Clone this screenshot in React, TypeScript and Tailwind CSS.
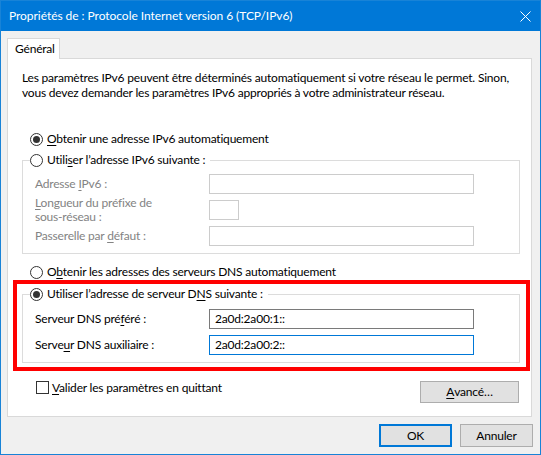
import type { ReactNode } from 'react';

function Radio({ checked, children }: { checked?: boolean; children: ReactNode }) {
  return (
    <span className="flex items-center h-[16px]">
      <span className="w-[13px] h-[13px] shrink-0 rounded-full border border-[#333333] bg-white flex items-center justify-center">
        {checked && <span className="w-[7px] h-[7px] rounded-full bg-[#333333]" />}
      </span>
      <span className="ml-[4px] whitespace-nowrap">{children}</span>
    </span>
  );
}

// underlined access key letter
function K({ children }: { children: ReactNode }) {
  return <span className="underline underline-offset-[2px]">{children}</span>;
}

function Field({ value, disabled, focused, small }: { value?: string; disabled?: boolean; focused?: boolean; small?: boolean }) {
  const border = disabled ? 'border-[#cccccc]' : focused ? 'border-[#0078d7]' : 'border-[#7a7a7a]';
  return (
    <div className={`h-[20px] ${small ? 'w-[30px]' : 'w-[265px]'} border ${border} bg-white pl-[5px] flex items-center leading-none text-black`}>
      {value}
    </div>
  );
}

function Row({ label, children }: { label: ReactNode; children: ReactNode }) {
  return (
    <div className="flex h-[20px]">
      <div className="w-[174px] h-[20px] flex items-center leading-[14px]">{label}</div>
      {children}
    </div>
  );
}

function Button({ children, primary, className = '' }: { children: ReactNode; primary?: boolean; className?: string }) {
  return (
    <div
      className={`flex items-center justify-center bg-[#e1e1e1] text-black ${
        primary ? 'border-2 border-[#0078d7]' : 'border border-[#adadad]'
      } ${className}`}
    >
      {children}
    </div>
  );
}

export default function App() {
  return (
    <div className="w-[541px] h-[455px] border border-[#1883d7] bg-[#f0f0f0] flex flex-col text-[12px] tracking-[-0.2px] font-['Lato','Noto_Sans',sans-serif] text-black">
      {/* barre de titre */}
      <div className="h-[30px] shrink-0 bg-[#0078d7] text-white flex items-center justify-between pl-[8px] pr-[9px]">
        <span className="whitespace-nowrap tracking-[-0.05px]">Propriétés de : Protocole Internet version 6 (TCP/IPv6)</span>
        <svg width="11" height="11" viewBox="0 0 11 11" className="block">
          <path d="M0.5 0.5 L10.5 10.5 M10.5 0.5 L0.5 10.5" stroke="#ffffff" strokeWidth="1" fill="none" />
        </svg>
      </div>

      <div className="flex-1 pl-[6px] pr-[7px] pt-[7px]">
        {/* onglet */}
        <div className="relative z-10 -mb-px w-[53px] h-[21px] bg-white border border-b-0 border-[#d9d9d9] pl-[7px] flex items-center">
          Général
        </div>

        {/* panneau de l'onglet */}
        <div className="w-[525px] h-[359px] bg-white border border-[#d9d9d9]">
          <p className="ml-[14px] mt-[11px] leading-[15px] whitespace-nowrap">
            Les paramètres IPv6 peuvent être déterminés automatiquement si votre réseau le permet. Sinon,
            <br />
            vous devez demander les paramètres IPv6 appropriés à votre administrateur réseau.
          </p>

          <div className="ml-[22px] mt-[31px]">
            <Radio checked>
              <K>O</K>btenir une adresse IPv6 automatiquement
            </Radio>
          </div>

          {/* adresse IPv6 manuelle (désactivée) */}
          <div className="ml-[14px] mt-[13px] w-[498px] border border-[#dcdcdc] pl-[12px] pb-[7px]">
            <div className="-mt-[9px] -ml-[5px] flex">
              <span className="bg-white pr-[5px]">
                <Radio>
                  Utili<K>s</K>er l’adresse IPv6 suivante :
                </Radio>
              </span>
            </div>
            <div className="mt-[6px] flex flex-col gap-[6px] text-[#838383]">
              <Row label={<span>Adresse <K>I</K>Pv6 :</span>}>
                <Field disabled />
              </Row>
              <Row
                label={
                  <span>
                    <K>L</K>ongueur du préfixe de
                    <br />
                    sous-réseau :
                  </span>
                }
              >
                <Field disabled small />
              </Row>
              <Row label={<span>Passerelle par <K>d</K>éfaut :</span>}>
                <Field disabled />
              </Row>
            </div>
          </div>

          <div className="ml-[22px] mt-[10px]">
            <Radio>
              O<K>b</K>tenir les adresses des serveurs DNS automatiquement
            </Radio>
          </div>

          {/* cadre rouge autour des DNS */}
          <div className="ml-[5px] w-[517px] border-4 border-[#ff0000] pl-[5px] pr-[6px] pt-[10px] pb-[4px]">
            <div className="w-[498px] border border-[#dcdcdc] pl-[12px] pb-[7px]">
              <div className="-mt-[9px] -ml-[5px] flex">
                <span className="bg-white pr-[5px]">
                  <Radio checked>
                    Utiliser l’adresse de serveur D<K>N</K>S suivante :
                  </Radio>
                </span>
              </div>
              <div className="mt-[7px] flex flex-col gap-[6px]">
                <Row label={<span>Serveur DNS pré<K>f</K>éré :</span>}>
                  <Field value="2a0d:2a00:1::" />
                </Row>
                <Row label={<span>Serve<K>u</K>r DNS auxiliaire :</span>}>
                  <Field value="2a0d:2a00:2::" focused />
                </Row>
              </div>
            </div>
          </div>

          <div className="mt-[10px] flex items-start justify-between">
            <div className="ml-[28px] h-[13px] flex items-center">
              <span className="w-[13px] h-[13px] border border-[#333333] bg-white" />
              <span className="ml-[3px] whitespace-nowrap">
                <K>V</K>alider les paramètres en quittant
              </span>
            </div>
            <Button className="mr-[12px] w-[99px] h-[22px]">
              <K>A</K>vancé…
            </Button>
          </div>
        </div>

        {/* boutons du bas */}
        <div className="mt-[7px] flex justify-end gap-[8px]">
          <Button primary className="w-[73px] h-[23px]">
            OK
          </Button>
          <Button className="w-[73px] h-[23px]">Annuler</Button>
        </div>
      </div>
    </div>
  );
}
